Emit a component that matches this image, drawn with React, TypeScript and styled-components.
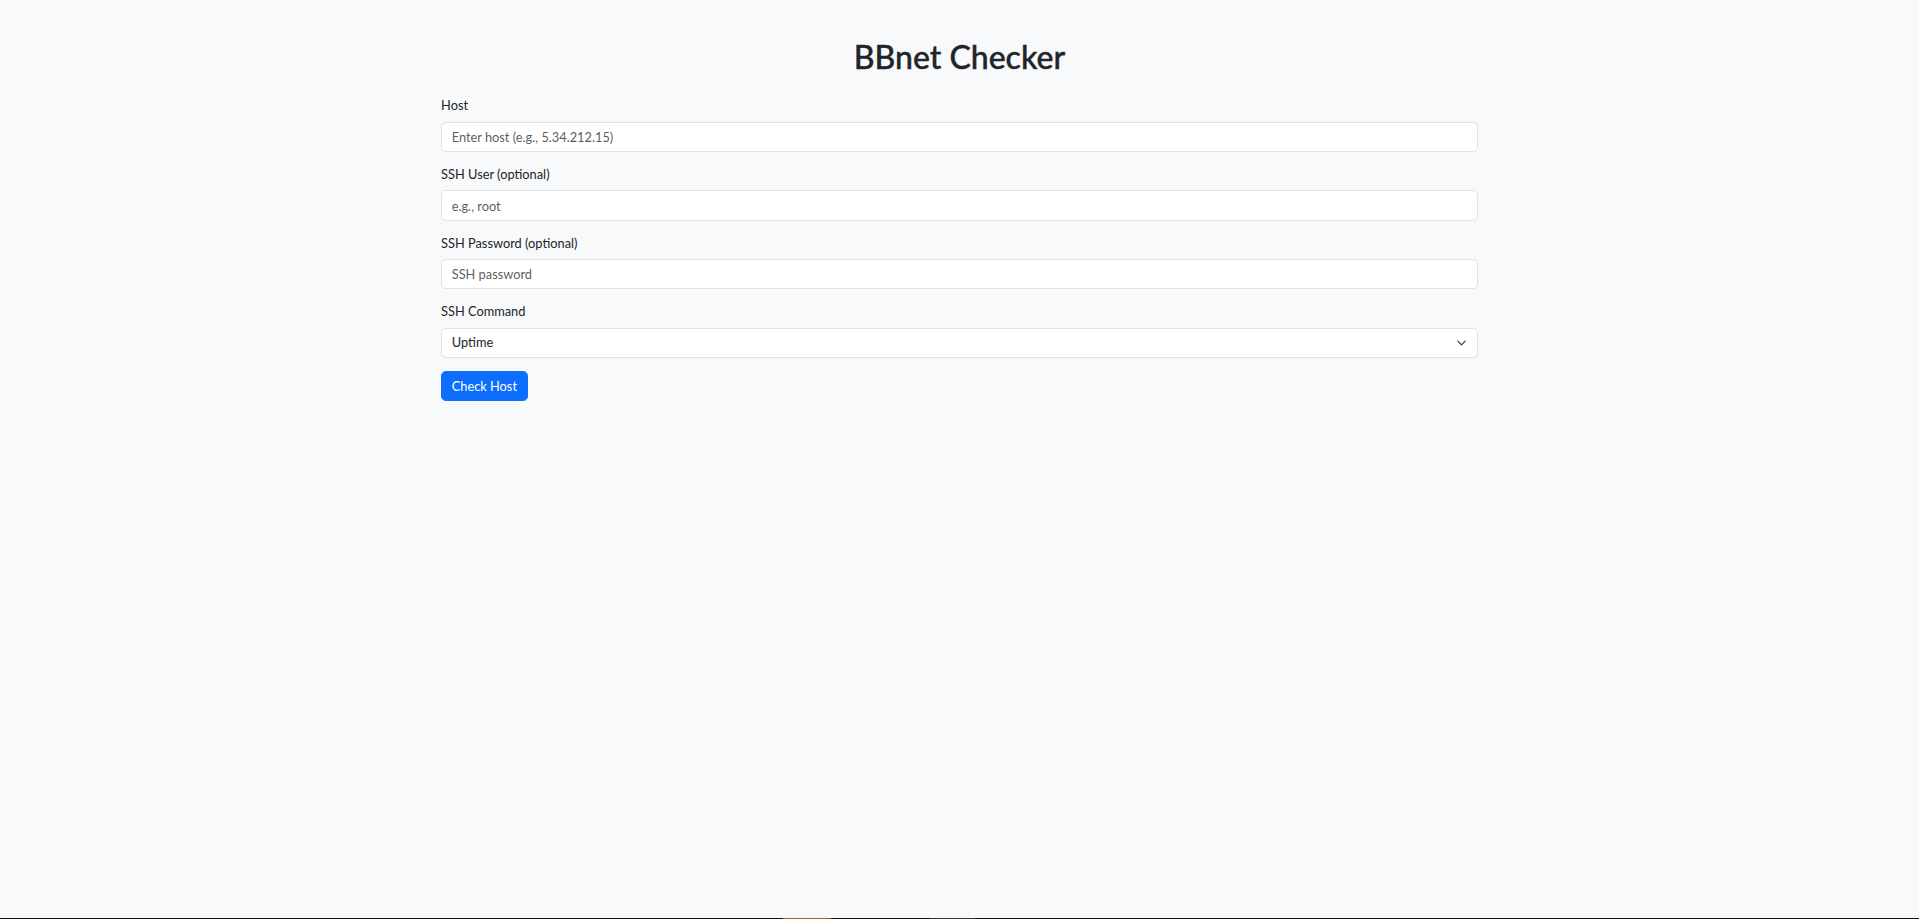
import styled, { createGlobalStyle } from 'styled-components'

const GlobalStyle = createGlobalStyle`
  html, body {
    margin: 0;
    padding: 0;
    background: #f8f9fa;
  }
  body {
    font-family: Lato, 'Liberation Sans', sans-serif;
    font-size: 12.8px;
    line-height: 1.5;
    color: #212529;
  }
  * {
    box-sizing: border-box;
  }
`

const Page = styled.div`
  min-height: 100vh;
  display: flex;
  flex-direction: column;
`

const Container = styled.main`
  flex: 1;
  width: 100%;
  max-width: 1056px;
  margin: 38.4px auto 0;
  padding: 0 9.6px;
`

const Title = styled.h1`
  margin: 0 0 19.2px;
  font-size: 32px;
  font-weight: 500;
  line-height: 1.2;
  text-align: center;
  -webkit-text-stroke: 0.4px #212529;
`

const Group = styled.div`
  margin-bottom: 12.8px;
`

const Label = styled.label`
  display: inline-block;
  margin-bottom: 6.4px;
`

const Input = styled.input`
  display: block;
  width: 100%;
  height: 30.4px;
  padding: 0 9.6px;
  font: inherit;
  color: #212529;
  background: #fff;
  border: 1px solid #dee2e6;
  border-radius: 4.8px;
  outline: none;

  &::placeholder {
    color: rgba(33, 37, 41, 0.75);
  }
`

const Select = styled.select`
  display: block;
  width: 100%;
  height: 30.4px;
  padding: 0 36px 0 9.6px;
  font: inherit;
  color: #212529;
  appearance: none;
  background: #fff
    url("data:image/svg+xml,%3csvg xmlns='http://www.w3.org/2000/svg' viewBox='0 0 16 16'%3e%3cpath fill='none' stroke='%23343a40' stroke-linecap='round' stroke-linejoin='round' stroke-width='2' d='m2 5 6 6 6-6'/%3e%3c/svg%3e")
    no-repeat right 9.6px center / 12.8px 9.6px;
  border: 1px solid #dee2e6;
  border-radius: 4.8px;
  outline: none;
`

const Button = styled.button`
  height: 30.4px;
  padding: 0 9.6px;
  font: inherit;
  color: #fff;
  background: #0d6efd;
  border: 1px solid #0d6efd;
  border-radius: 4.8px;
  cursor: pointer;
`

const Taskbar = styled.div`
  height: 1px;
  background: #111;
  display: flex;
`

const TaskbarSlot = styled.span<{ $left: number; $width: number; $color: string }>`
  margin-left: ${(p) => p.$left}px;
  width: ${(p) => p.$width}px;
  background: ${(p) => p.$color};
`

const fields = [
  { id: 'host', label: 'Host', placeholder: 'Enter host (e.g., 5.34.212.15)', type: 'text' },
  { id: 'user', label: 'SSH User (optional)', placeholder: 'e.g., root', type: 'text' },
  { id: 'pass', label: 'SSH Password (optional)', placeholder: 'SSH password', type: 'password' },
]

export default function App() {
  return (
    <Page>
      <GlobalStyle />
      <Container>
        <Title>BBnet Checker</Title>
        <form onSubmit={(e) => e.preventDefault()}>
          {fields.map((f) => (
            <Group key={f.id}>
              <Label htmlFor={f.id}>{f.label}</Label>
              <Input id={f.id} type={f.type} placeholder={f.placeholder} />
            </Group>
          ))}
          <Group>
            <Label htmlFor="cmd">SSH Command</Label>
            <Select id="cmd" defaultValue="uptime">
              <option value="uptime">Uptime</option>
              <option value="df">Disk usage</option>
              <option value="free">Memory</option>
            </Select>
          </Group>
          <Button type="submit">Check Host</Button>
        </form>
      </Container>
      <Taskbar>
        <TaskbarSlot $left={783} $width={48} $color="#a0602a" />
        <TaskbarSlot $left={99} $width={45} $color="#333" />
      </Taskbar>
    </Page>
  )
}
